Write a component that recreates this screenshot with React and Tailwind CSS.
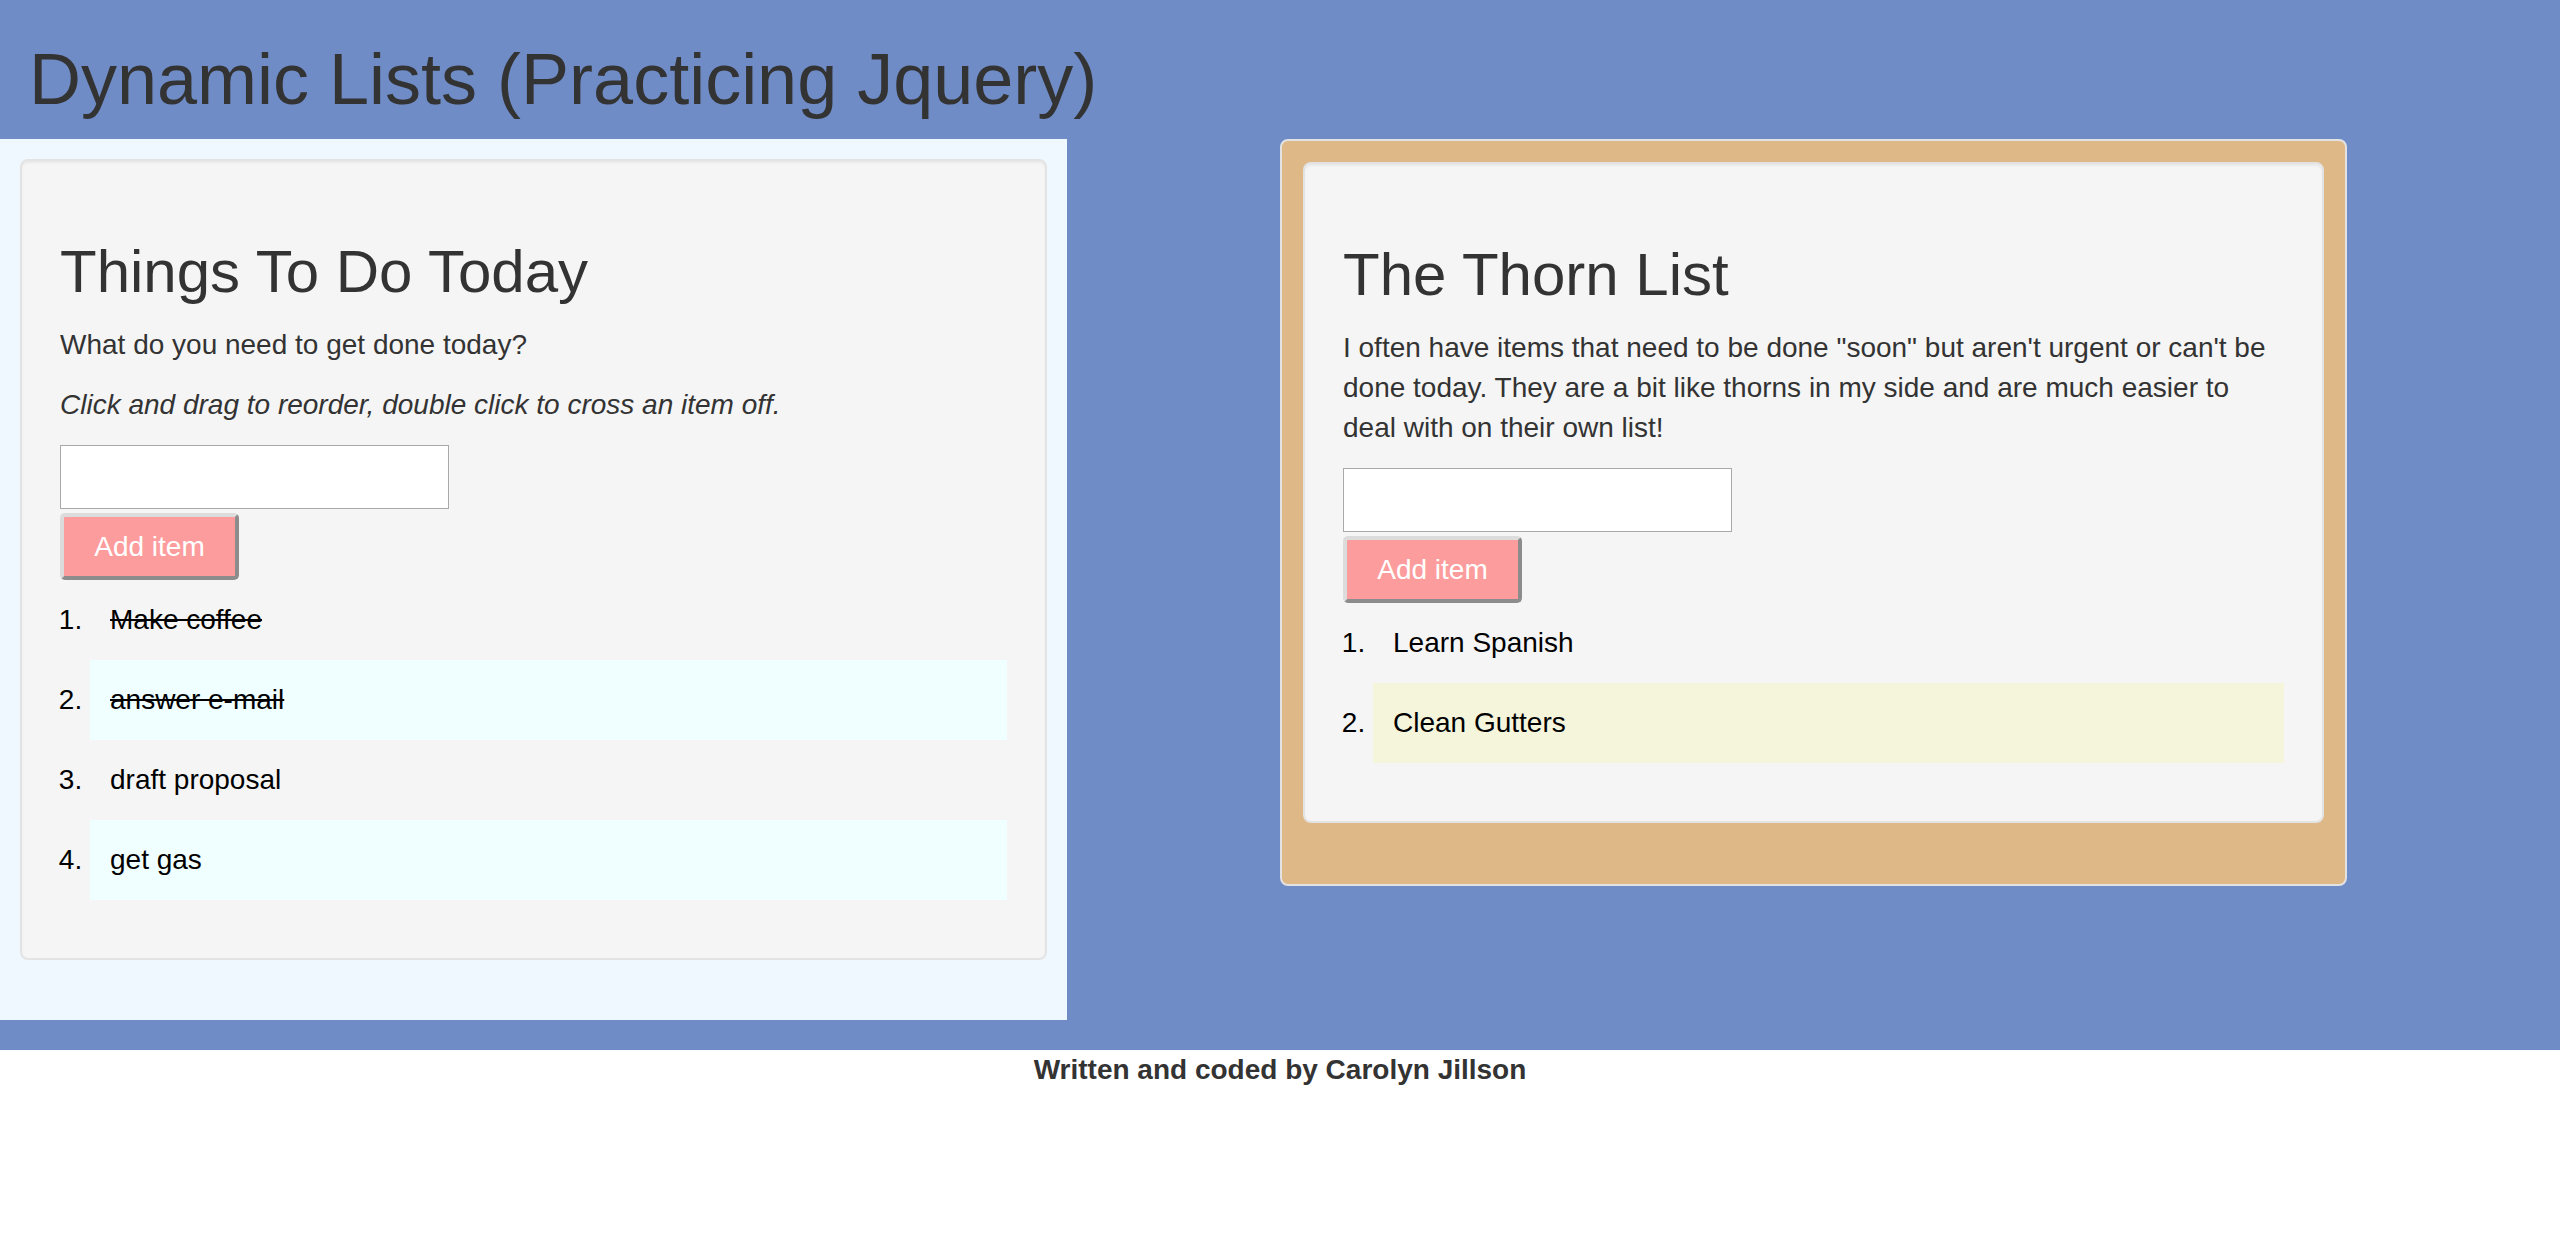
import React from 'react';

const todayItems = [
  { text: 'Make coffee', done: true },
  { text: 'answer e-mail', done: true },
  { text: 'draft proposal', done: false },
  { text: 'get gas', done: false },
];

const thornItems = [
  { text: 'Learn Spanish', done: false },
  { text: 'Clean Gutters', done: false },
];

function ListCard({ title, children, items, stripe }) {
  return (
    <div className="rounded-[8px] border-2 border-[#e3e3e3] bg-[#f5f5f5] p-[38px] shadow-[inset_0_2px_2px_rgba(0,0,0,0.05)]">
      <h2 className="mt-[40px] mb-[20px] text-[60px] leading-[1.1] font-normal text-[#333]">{title}</h2>
      {children}
      <input type="text" className="block h-[64px] w-[389px] border border-[#a9a9a9] bg-white" />
      <button className="mt-[4px] block h-[67px] w-[179px] rounded-[5px] border-4 border-t-[#dcdcdc] border-l-[#dcdcdc] border-r-[#8c8c8c] border-b-[#8c8c8c] bg-[#fc9c9c] text-[28px] leading-[40px] text-white">
        Add item
      </button>
      <ol className="mb-[20px] list-decimal pl-[30px] text-black">
        {items.map((item, i) => (
          <li
            key={item.text}
            className={`px-[20px] py-[20px] leading-[40px] ${i % 2 === 1 ? stripe : ''}`}
          >
            <span className={item.done ? 'line-through' : ''}>{item.text}</span>
          </li>
        ))}
      </ol>
    </div>
  );
}

export default function App() {
  return (
    <div className="min-h-screen bg-white font-['Liberation_Sans',Arial,sans-serif] text-[28px] leading-[40px] text-[#333]">
      <div className="bg-[#6f8cc6] pb-[30px]">
        <h1 className="px-[29px] pt-[40px] pb-[20px] text-[72px] leading-[1.1] font-normal text-[#333]">
          Dynamic Lists (Practicing Jquery)
        </h1>
        <div className="flex items-start">
          {/* Things to do today */}
          <div className="w-[41.6667%] bg-[#f0f8ff] p-[20px] pb-[60px]">
            <ListCard title="Things To Do Today" items={todayItems} stripe="bg-[#f0ffff]">
              <p className="mb-[20px]">What do you need to get done today?</p>
              <p className="mb-[20px] italic">Click and drag to reorder, double click to cross an item off.</p>
            </ListCard>
          </div>

          {/* Thorn list */}
          <div className="ml-[8.3333%] w-[41.6667%] rounded-[8px] border-2 border-[#e2e2e2] bg-[#deb887] p-[21px]">
            <div className="mb-[40px]">
              <ListCard title="The Thorn List" items={thornItems} stripe="bg-[#f5f5dc]">
                <p className="mb-[20px]">
                  I often have items that need to be done "soon" but aren't urgent or can't be done today. They are a bit like thorns in my side and are much easier to deal with on their own list!
                </p>
              </ListCard>
            </div>
          </div>
        </div>
      </div>
      <p className="text-center font-bold">Written and coded by Carolyn Jillson</p>
    </div>
  );
}
